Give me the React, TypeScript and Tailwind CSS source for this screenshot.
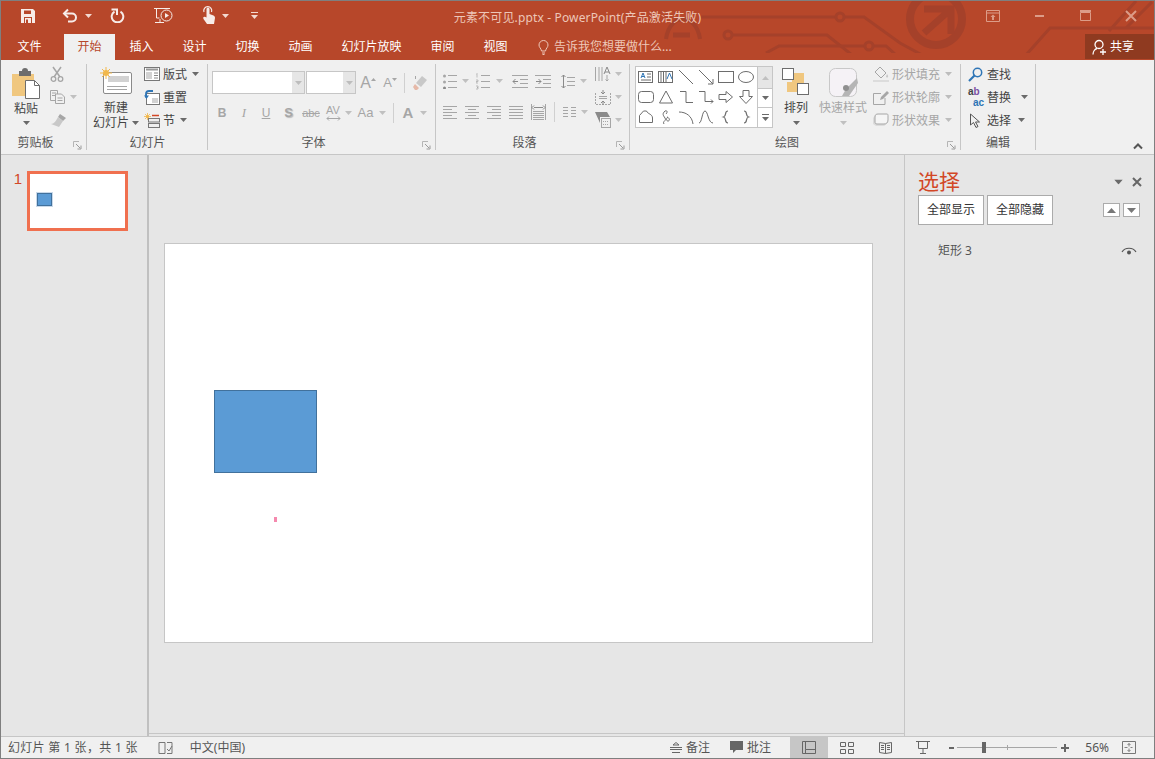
import type { ReactNode } from 'react'

const G = '#a6a6a6'
const D = '#6d6d6d'

function Ic({ w = 16, h = 16, children, className = '' }: { w?: number; h?: number; children: ReactNode; className?: string }) {
  return (
    <svg width={w} height={h} viewBox={`0 0 ${w} ${h}`} fill="none" className={`shrink-0 ${className}`}>
      {children}
    </svg>
  )
}

function Caret({ color = '#6a6a6a', className = '' }: { color?: string; className?: string }) {
  return (
    <svg width="7" height="4" viewBox="0 0 7 4" className={`shrink-0 ${className}`}>
      <path d="M0 0h7L3.5 4z" fill={color} />
    </svg>
  )
}

function Launcher() {
  return (
    <svg width="9" height="9" viewBox="0 0 9 9" fill="none" className="absolute right-[4px] bottom-0">
      <path d="M.5 6V.5H6" stroke="#b5b5b5" />
      <path d="M3 3l4 4M8 4.5V8H4.5" stroke="#9a9a9a" />
    </svg>
  )
}

function Group({ w, label, launcher, children }: { w: number; label: string; launcher?: boolean; children: ReactNode }) {
  return (
    <div style={{ width: w }} className="relative flex h-[86px] shrink-0 flex-col border-r border-[#c6c6c6]">
      <div className="h-[72px] shrink-0">{children}</div>
      <div className={`text-center text-[12px] leading-[14px] text-[#555] ${launcher ? 'pr-[16px]' : ''}`}>{label}</div>
      {launcher && <Launcher />}
    </div>
  )
}

function SmallRow({ icon, text, caret, muted, gap = 'gap-[3px]' }: { icon: ReactNode; text: string; caret?: boolean; muted?: boolean; gap?: string }) {
  return (
    <div className={`flex h-[20px] items-center ${gap}`}>
      {icon}
      <span className={`mt-[2px] text-[12px] leading-[16px] ${muted ? 'text-[#a6a6a6]' : 'text-[#444]'}`}>{text}</span>
      {caret && <Caret color={muted ? '#bdbdbd' : '#6a6a6a'} className="ml-[2px]" />}
    </div>
  )
}

function Cell({ w = 22, children }: { w?: number; children: ReactNode }) {
  return (
    <div style={{ width: w }} className="flex h-[22px] shrink-0 items-center justify-center text-[#a6a6a6]">
      {children}
    </div>
  )
}

const lines = (x1: number, x2: number, ys: number[], c = G) =>
  ys.map(y => <path key={y} d={`M${x1} ${y + 0.5}H${x2}`} stroke={c} />)

function Combo({ w }: { w: number }) {
  return (
    <div style={{ width: w }} className="flex h-[23px] border border-[#c6c6c6] bg-white">
      <div className="flex-1" />
      <div className="flex w-[12px] items-center justify-center bg-[#e6e6e6]">
        <Caret color="#bdbdbd" />
      </div>
    </div>
  )
}

const galleryShapes: ReactNode[] = [
  <><rect x=".5" y="2.5" width="14" height="11" stroke={D} /><path d="M3 9l2-5 2 5M4 7.5h2" stroke="#2f75b5" /><path d="M9 5h4M9 8h4M3 11h10" stroke={D} /></>,
  <><rect x=".5" y="2.5" width="14" height="11" stroke={D} /><path d="M3 3v10M5.500 3v10M8 3v10" stroke={D} /><path d="M9 10l2.500-6L14 10" stroke="#2f75b5" /></>,
  <path d="M1 1l14 14" stroke={D} />,
  <><path d="M1 1l14 14" stroke={D} /><path d="M15 10v5h-5" stroke={D} /></>,
  <rect x=".5" y="2.500" width="15" height="11" stroke={D} />,
  <ellipse cx="8" cy="8" rx="7.500" ry="5.500" stroke={D} />,
  <rect x=".5" y="2.500" width="15" height="11" rx="3" stroke={D} />,
  <path d="M8 2L14.500 14H1.500z" stroke={D} />,
  <path d="M2 2.500h6v11h7" stroke={D} />,
  <><path d="M1 2.500h6v10h8" stroke={D} /><path d="M13 10.500l2 2-2 2" stroke={D} /></>,
  <path d="M1 5.500h7v-3l6.500 5.500L8 13.500v-3H1z" stroke={D} />,
  <path d="M5 1.500h6v6h3.500L8 14.500 1.500 7.500H5z" stroke={D} />,
  <path d="M1.500 13.500v-7l4-4.500h3c1 3 6 3 6 7v4.500z" stroke={D} />,
  <path d="M6 15c-2-3 3-3 1-6S4 5 7 2c2-1 3 1 1 3M9 8c3 1 3 4 1 4-2 0-2-3 0-4" stroke={D} />,
  <path d="M1 3c7 0 13 4 14 12" stroke={D} />,
  <path d="M1 14c3 0 3-12 6-12s3 12 8 12" stroke={D} />,
  <path d="M10 2C6 2 9 7 5.500 8 9 9 6 14 10 14" stroke={D} strokeWidth="1.200" />,
  <path d="M6 2c4 0 1 5 4.500 6C7 9 10 14 6 14" stroke={D} strokeWidth="1.200" />,
]

function Gallery() {
  return (
    <div className="mt-[2px] ml-[5px] flex h-[62px] w-[138px] border border-[#c6c6c6] bg-white">
      <div className="grid flex-1 grid-cols-[repeat(6,20px)] grid-rows-[repeat(3,20px)]">
        {galleryShapes.map((s, i) => (
          <div key={i} className="flex items-center justify-center">
            <Ic>{s}</Ic>
          </div>
        ))}
      </div>
      <div className="flex w-[15px] flex-col border-l border-[#c6c6c6] text-[0]">
        <div className="flex h-[21px] items-center justify-center bg-[#e6e6e6]">
          <svg width="7" height="4" viewBox="0 0 7 4"><path d="M0 4h7L3.500 0z" fill="#c0c0c0" /></svg>
        </div>
        <div className="flex h-[20px] items-center justify-center border-y border-[#c6c6c6]"><Caret /></div>
        <div className="flex flex-1 flex-col items-center justify-center gap-[2px]">
          <div className="h-px w-[7px] bg-[#6a6a6a]" />
          <Caret />
        </div>
      </div>
    </div>
  )
}

function QuickAccess() {
  return (
    <div className="flex h-[33px] items-center pb-[4px]">
      <div className="ml-[16px] flex w-[22px] justify-center">
        <Ic w={14} h={14}>
          <path d="M0 0h12l2 2v12H0z" fill="#f7ece8" />
          <path d="M3 1.500h7v3.500H3z" fill="#b7472a" />
          <path d="M3 8h8v6H3z" fill="#b7472a" />
          <path d="M4 9h6v5H4z" fill="#f7ece8" />
          <path d="M5 10.500h2v3.500H5z" fill="#b7472a" />
        </Ic>
      </div>
      <div className="ml-[20px] flex w-[22px] justify-center">
        <Ic w={16} h={15}>
          <path d="M6 1.500L2 5.500l4 4" stroke="#f7ece8" strokeWidth="2" />
          <path d="M2.500 5.500H10a4 4 0 010 8H6" stroke="#f7ece8" strokeWidth="2" />
        </Ic>
      </div>
      <Caret color="#f3d9d0" className="ml-[4px]" />
      <div className="ml-[14px] flex w-[22px] justify-center">
        <Ic w={15} h={15}>
          <path d="M10.500 3.600a5.800 5.800 0 1 1-6 0" stroke="#f7ece8" strokeWidth="2" />
          <path d="M1.500 1.500h5.500v5.500" stroke="#f7ece8" strokeWidth="2" />
        </Ic>
      </div>
      <div className="ml-[24px] flex w-[24px] justify-center">
        <Ic w={20} h={18}>
          <path d="M0 1.500h16M2.500 2v9h3M6 12v3.500M1 15.500h9" stroke="#f7ece8" />
          <circle cx="12.500" cy="8.500" r="5.500" stroke="#f7ece8" />
          <path d="M11 6l4 2.500-4 2.500z" fill="#f7ece8" />
        </Ic>
      </div>
      <div className="ml-[22px] flex w-[22px] justify-center">
        <Ic w={14} h={19}>
          <path d="M4.500 9V3a1.500 1.500 0 013 0v5l4 1.500c1 .5 1.500 1.500 1.500 2.500l-1 6H5L1.500 13c-1-2 1-3 3-1.500z" fill="#f7ece8" />
          <path d="M2 6a4 4 0 117.500 0" stroke="#f7ece8" strokeWidth="1.200" />
        </Ic>
      </div>
      <Caret color="#f3d9d0" className="ml-[2px]" />
      <div className="ml-[22px] flex flex-col items-center gap-[2px]">
        <div className="h-px w-[7px] bg-[#f3d9d0]" />
        <Caret color="#f3d9d0" />
      </div>
      <div className="ml-auto flex text-[0]">
        <div className="flex w-[46px] justify-center">
          <Ic w={14} h={12}>
            <path d="M.5.500h13v11H.5zM.5 3h13" stroke="#dc9c88" />
            <path d="M7 4.500L4.500 7H6v3h2V7h1.500z" fill="#dc9c88" />
          </Ic>
        </div>
        <div className="flex w-[46px] items-center justify-center">
          <div className="h-[2px] w-[9px] bg-[#dc9c88]" />
        </div>
        <div className="flex w-[46px] justify-center">
          <Ic w={11} h={11}>
            <path d="M.5 2.500h10v8H.5z" stroke="#dc9c88" />
            <path d="M0 0h11v2H0z" fill="#dc9c88" />
          </Ic>
        </div>
        <div className="flex w-[46px] justify-center">
          <Ic w={12} h={12}>
            <path d="M1 1l10 10M11 1L1 11" stroke="#dc9c88" strokeWidth="2" />
          </Ic>
        </div>
      </div>
    </div>
  )
}

function CircuitArt() {
  return (
    <svg width="1155" height="52" viewBox="0 0 1155 52" fill="none" className="pointer-events-none absolute top-0 left-0">
      <g stroke="#a5412a" strokeWidth="3">
        <path d="M665 38c2-14 10-20 17-20s15 6 17 20" strokeWidth="4" />
        <path d="M672 34h17" strokeWidth="5" />
        <path d="M700 16h135M843 16h20l36 26 22 12" />
        <circle cx="839" cy="16" r="4" />
        <circle cx="727" cy="34" r="4" />
        <path d="M731 34h95l25 20" />
        <path d="M765 52l13-7h86M872 45h13l9 8" />
        <circle cx="868" cy="45" r="4" />
        <circle cx="935" cy="18" r="26" strokeWidth="8" />
        <path d="M923 8h27v25M950 8l-27 24" strokeWidth="7" />
        <path d="M1025 54l24-27h106M1108 30l27-30M1125 27l26-26" />
      </g>
    </svg>
  )
}

function Tabs() {
  const tabs = ['插入', '设计', '切换', '动画', '幻灯片放映', '审阅', '视图']
  return (
    <div className="relative flex h-[26px] items-stretch text-[12px] leading-[26px] text-white">
      <div className="ml-[15px] w-[27px] text-center">文件</div>
      <div className="ml-[21px] w-[51px] bg-[#f0f0f0] text-center text-[#b7472a]">开始</div>
      <div className="flex gap-[2px] pl-[1px]">
        {tabs.map(t => (
          <div key={t} className="px-[13.500px]">{t}</div>
        ))}
      </div>
      <div className="ml-[17px] flex items-center gap-[5px] text-[#eec7b9]">
        <Ic w={11} h={15}>
          <path d="M3.500 11C3 8 1 7.500 1 5a4.500 4.500 0 019 0c0 2.500-2 3-2.500 6zM4 13h3M4.500 14.500h2" stroke="#eec7b9" />
        </Ic>
        告诉我您想要做什么...
      </div>
      <div className="ml-auto flex h-[25px] w-[69px] items-center gap-[2px] bg-[#8f3a20] pl-[7px]">
        <Ic w={16} h={16}>
          <circle cx="7" cy="5.500" r="4" stroke="#fff" strokeWidth="1.300" />
          <path d="M1 15.500c0-3 2-5.500 4-6M11 10v6M8 13h6" stroke="#fff" strokeWidth="1.300" />
        </Ic>
        共享
      </div>
    </div>
  )
}

function ClipboardGroup() {
  return (
    <Group w={86} label="剪贴板" launcher>
      <div className="flex">
        <div className="ml-[5px] flex w-[40px] flex-col items-center text-[12px] leading-[15px] text-[#444]">
          <Ic w={30} h={33} className="mt-[3px]">
            <path d="M1 7h22v22H1z" fill="#f0c77f" />
            <path d="M8 4h3a3 3 0 016 0h3v5H8z" fill="#6d6d6d" />
            <path d="M14.500 13.500h9l5 5v13h-14z" fill="#fff" stroke="#6d6d6d" />
            <path d="M23.500 13.500v5h5" stroke="#6d6d6d" />
          </Ic>
          <span className="mt-[1px] leading-[16px]">粘贴</span>
          <Caret className="mt-[4px]" />
        </div>
        <div className="flex flex-col gap-[3px] pl-[4px]">
          <div className="flex h-[20px] items-center">
            <Ic w={14} h={16}>
              <path d="M3 1l7 10M11 1L4 11" stroke={G} strokeWidth="1.500" />
              <circle cx="3.500" cy="13" r="2.300" stroke={G} strokeWidth="1.300" />
              <circle cx="10.500" cy="13" r="2.300" stroke={G} strokeWidth="1.300" />
            </Ic>
          </div>
          <div className="flex h-[20px] items-center gap-[4px]">
            <Ic w={16} h={14}>
              <path d="M.5.500h7v10h-7zM2 3h4M2 5.500h4" stroke={G} />
              <path d="M5.500 4h6l3 3v6.500h-9z" fill="#f0f0f0" stroke={G} />
              <path d="M7.500 8h5M7.500 10.500h5" stroke={G} />
            </Ic>
            <Caret color="#c0c0c0" />
          </div>
          <div className="flex h-[20px] items-center">
            <Ic w={17} h={15}>
              <path d="M10 1l6 4-3 3-5-4z" fill={G} />
              <path d="M8 4l5 4-4 6-8-3c3 0 5-3 7-7z" fill="#c8c8c8" />
            </Ic>
          </div>
        </div>
      </div>
    </Group>
  )
}

function SlidesGroup() {
  return (
    <Group w={120} label="幻灯片">
      <div className="flex">
        <div className="ml-[5px] flex w-[46px] flex-col items-center text-[12px] leading-[15px] text-[#444]">
          <Ic w={32} h={28} className="mt-[3px]">
            <rect x="3.500" y="5.500" width="28" height="21" rx="1.500" fill="#fff" stroke="#8a8a8a" />
            <path d="M8 9h21v6H8z" fill="#d2d2d2" />
            <path d="M7 19.500h20M7 22.500h20" stroke="#a6a6a6" />
            <circle cx="6" cy="6" r="3" fill="#f2b84b" />
            <path d="M6 0v12M0 6h12M2 2l8 8M10 2l-8 8" stroke="#f2b84b" />
          </Ic>
          <span className="mt-[5px] leading-[15px]">新建</span>
          <span className="flex items-center gap-[3px]">
            幻灯片
            <Caret />
          </span>
        </div>
        <div className="ml-[5px] flex flex-col gap-[3px]">
          <SmallRow
            icon={
              <Ic w={16} h={14}>
                <rect x=".5" y=".5" width="15" height="13" stroke="#777" fill="#fff" />
                <path d="M2 2.500h12" stroke="#999" strokeWidth="2" />
                <path d="M2 5h6v7H2z" fill="#d2d2d2" />
                <path d="M10 6h4M10 8.500h4M10 11h4" stroke="#888" />
              </Ic>
            }
            text="版式"
            caret
          />
          <SmallRow
            icon={
              <Ic w={16} h={15}>
                <rect x="2.500" y="3.500" width="13" height="11" stroke="#777" fill="#fff" />
                <path d="M8 8h6v5H8z" fill="#d2d2d2" />
                <path d="M2 7.500V4a3 3 0 013-3h4" stroke="#2e75b6" strokeWidth="1.800" />
                <path d="M0 5.500h5L2.500 9z" fill="#2e75b6" />
              </Ic>
            }
            text="重置"
          />
          <SmallRow
            icon={
              <Ic w={16} h={15}>
                <circle cx="3.500" cy="3.500" r="1.500" fill="#f2b84b" />
                <path d="M3.500 0v7M0 3.500h7M1 1l5 5M6 1L1 6" stroke="#f2b84b" strokeWidth=".8" />
                <path d="M8 2.500h7" stroke="#d24726" strokeWidth="1.500" />
                <rect x="4.500" y="5.500" width="11" height="3.500" stroke="#777" />
                <rect x="4.500" y="10.500" width="11" height="4" stroke="#777" />
              </Ic>
            }
            text="节"
            caret
          />
        </div>
      </div>
    </Group>
  )
}

function FontGroup() {
  return (
    <Group w={228} label="字体" launcher>
      <div className="flex items-center pt-[7px] pl-[4px]">
        <Combo w={93} />
        <div className="w-px" />
        <Combo w={50} />
        <div className="ml-px flex">
          <Cell>
            <span className="font-['Liberation_Sans',sans-serif] text-[16px]">A</span>
            <span className="mb-[7px] text-[0]"><svg width="5" height="3"><path d="M0 3h5L2.500 0z" fill={G} /></svg></span>
          </Cell>
          <Cell>
            <span className="font-['Liberation_Sans',sans-serif] text-[13px]">A</span>
            <span className="mb-[7px] text-[0]"><svg width="5" height="3"><path d="M0 0h5L2.500 3z" fill={G} /></svg></span>
          </Cell>
        </div>
        <div className="mx-[3px] h-[20px] w-px bg-[#d0d0d0]" />
        <Cell w={24}>
          <Ic w={16} h={16}>
            <path d="M4 8l6-7 5 4-6 7z" fill="#c8c8c8" />
            <path d="M3 9l4 4-2 2H3l-2-3z" fill="#e6b9a8" />
            <path d="M3.500 1v3" stroke={G} />
          </Ic>
        </Cell>
      </div>
      <div className="mt-[8px] flex items-center pl-[3px] font-['Liberation_Sans',sans-serif]">
        <Cell><span className="text-[12px] font-bold">B</span></Cell>
        <Cell><span className="font-['Liberation_Serif',serif] text-[13px] italic">I</span></Cell>
        <Cell><span className="text-[12px] underline">U</span></Cell>
        <Cell w={23}><span className="text-[13px] font-bold [text-shadow:1px_1px_1px_#bbb]">S</span></Cell>
        <Cell><span className="text-[11px] line-through">abc</span></Cell>
        <Cell>
          <span className="flex flex-col items-center text-[11px] leading-[11px]">
            AV
            <svg width="15" height="5" viewBox="0 0 15 5" fill="none"><path d="M1 2.500h13M3 .5l-2 2 2 2M12 .5l2 2-2 2" stroke={G} /></svg>
          </span>
        </Cell>
        <Caret color="#c0c0c0" className="ml-[1px]" />
        <Cell w={27}><span className="text-[13px]">Aa</span></Cell>
        <Caret color="#c0c0c0" />
        <div className="mr-[3px] ml-[7px] h-[20px] w-px bg-[#d0d0d0]" />
        <Cell w={22}><span className="text-[15px] font-bold">A</span></Cell>
        <Caret color="#c0c0c0" className="ml-[1px]" />
      </div>
    </Group>
  )
}

function AlignIcon({ kind }: { kind: 'l' | 'c' | 'r' | 'j' }) {
  const short = { l: 'M0 3.500h9M0 9.500h9', c: 'M3 3.500h8M3 9.500h8', r: 'M5 3.500h9M5 9.500h9', j: 'M0 3.500h14M0 9.500h14' }[kind]
  return (
    <Ic w={14} h={13}>
      <path d="M0 .5h14M0 6.500h14M0 12.500h14" stroke={G} />
      <path d={short} stroke={G} />
    </Ic>
  )
}

function ParagraphGroup() {
  return (
    <Group w={194} label="段落" launcher>
      <div className="flex">
        <div className="flex w-[159px] flex-col pl-[7px]">
          <div className="mt-[6px] flex h-[22px] items-center">
            <Ic w={14} h={15}>
              <circle cx="1.500" cy="2" r="1.500" fill={G} />
              <circle cx="1.500" cy="8" r="1.500" fill={G} />
              <circle cx="1.500" cy="14" r="1.500" fill="#8a8a8a" />
              {lines(5, 14, [1, 7, 13])}
            </Ic>
            <Caret color="#c0c0c0" className="ml-[5px]" />
            <Ic w={15} h={17} className="ml-[7px]">
              <path d="M0 1.500l1-1v4M0 7h2v1.500H0V10h2M0 13h2v1.500H1 2V16H0" stroke={G} strokeWidth=".7" />
              {lines(5, 14, [2, 8, 14])}
            </Ic>
            <Caret color="#c0c0c0" className="ml-[5px]" />
            <Ic w={16} h={13} className="ml-[9px]">
              {lines(0, 16, [0, 12])}
              {lines(8, 16, [4, 8])}
              <path d="M6 6.500H1M3.500 4L1 6.500 3.500 9" stroke="#8a8a8a" />
            </Ic>
            <Ic w={16} h={13} className="ml-[7px]">
              {lines(0, 16, [0, 12])}
              {lines(8, 16, [4, 8])}
              <path d="M1 6.500h5M3.500 4L6 6.500 3.500 9" stroke="#8a8a8a" />
            </Ic>
            <Ic w={14} h={15} className="ml-[10px]">
              <path d="M2.500 1v13M.5 3l2-2 2 2M.5 12l2 2 2-2" stroke="#8a8a8a" />
              {lines(6, 14, [3, 7, 11])}
            </Ic>
            <Caret color="#c0c0c0" className="ml-[5px]" />
          </div>
          <div className="mt-[9px] flex h-[22px] items-center">
            <AlignIcon kind="l" />
            <div className="ml-[8px]"><AlignIcon kind="c" /></div>
            <div className="ml-[8px]"><AlignIcon kind="r" /></div>
            <div className="ml-[8px]"><AlignIcon kind="j" /></div>
            <Ic w={15} h={16} className="ml-[8px]">
              <path d="M.5 0v16M14.500 0v16" stroke={G} />
              <path d="M3 3.500h9M3 1.500l-2 2 2 2M12 1.500l2 2-2 2" stroke="#8a8a8a" />
              {lines(2, 13, [7, 9, 11, 13, 15])}
            </Ic>
            <div className="mr-[8px] ml-[8px] h-[20px] w-px bg-[#d0d0d0]" />
            <Ic w={13} h={12}>
              {lines(0, 5, [1, 4, 7, 10])}
              {lines(8, 13, [1, 4, 7, 10])}
            </Ic>
            <Caret color="#c0c0c0" className="ml-[5px]" />
          </div>
        </div>
        <div className="flex flex-col gap-[3px]">
          <div className="flex h-[20px] items-center gap-[4px]">
            <Ic w={16} h={17}>
              <path d="M.5 1v14M4 1v14M7 1v14" stroke={G} />
              <path d="M9 8l3-7 3 7M10 6h4" stroke="#8a8a8a" />
              <path d="M12 9v6M10.500 13.500l1.500 1.500 1.500-1.500" stroke={G} />
            </Ic>
            <Caret color="#c0c0c0" />
          </div>
          <div className="flex h-[20px] items-center gap-[4px]">
            <Ic w={16} h={15}>
              <path d="M.5 3v11.500h15V3" stroke={G} strokeDasharray="2 1" />
              <path d="M8 0v4M6 2l2 2 2-2M8 15v-4M6 13l2-2 2 2" stroke="#8a8a8a" />
              {lines(4, 12, [6, 8])}
            </Ic>
            <Caret color="#c0c0c0" />
          </div>
          <div className="flex h-[20px] items-center gap-[4px]">
            <Ic w={16} h={16}>
              <path d="M0 0h12l3 5H5v6z" fill="#8a8a8a" />
              <rect x="6.500" y="6.500" width="9" height="9" fill="#f0f0f0" stroke={G} />
              <path d="M8 9.500h6M8 12.500h6" stroke={G} strokeDasharray="1 1" />
            </Ic>
            <Caret color="#c0c0c0" />
          </div>
        </div>
      </div>
    </Group>
  )
}

function DrawingGroup() {
  return (
    <Group w={331} label="绘图" launcher>
      <div className="flex">
        <Gallery />
        <div className="ml-[8px] flex w-[30px] flex-col items-center text-[12px] text-[#444]">
          <Ic w={28} h={28} className="mt-[4px]">
            <path d="M10 5h12v10H10zM5 14h10v10H5z" fill="#f0c77f" />
            <rect x=".5" y=".5" width="11" height="11" fill="#fff" stroke="#6d6d6d" />
            <rect x="15.500" y="15.500" width="11" height="11" fill="#fff" stroke="#6d6d6d" />
          </Ic>
          <span className="mt-[4px] leading-[16px] whitespace-nowrap">排列</span>
          <Caret className="mt-[5px]" />
        </div>
        <div className="ml-[7px] flex w-[50px] flex-col items-center text-[12px] text-[#a6a6a6]">
          <Ic w={30} h={30} className="mt-[4px]">
            <rect x="1.500" y=".5" width="27" height="28" rx="6" fill="#f5f2f6" stroke="#c8c8c8" />
            <path d="M29 10L18 21l-4 7h7l9-13z" fill="#b5b5b5" />
            <circle cx="18" cy="20" r="3" fill="#8f8f8f" />
          </Ic>
          <span className="mt-[2px] leading-[16px] whitespace-nowrap">快速样式</span>
          <Caret color="#c0c0c0" className="mt-[5px]" />
        </div>
        <div className="ml-[5px] flex flex-col gap-[3px]">
          <SmallRow
            muted
            caret
            icon={
              <Ic w={16} h={16}>
                <path d="M7 1l6 6-5 5-6-6z" stroke={G} fill="#f0f0f0" />
                <path d="M0 14h16v2H0z" fill="#dcdcdc" />
                <path d="M14 8c1 1.500 1.500 2 1 3s-2 .5-2-.5z" fill="#c8c8c8" />
              </Ic>
            }
            text="形状填充"
          />
          <SmallRow
            muted
            caret
            icon={
              <Ic w={16} h={15}>
                <path d="M12 8v6.500H.5v-11H8" stroke={G} />
                <path d="M14 1l2 2-6 6-3 1 1-3z" fill={G} />
              </Ic>
            }
            text="形状轮廓"
          />
          <SmallRow
            muted
            caret
            icon={
              <Ic w={16} h={14}>
                <path d="M3 1h11v8c0 2-2 4-4 4H3l-3-2V5z" fill="#dcdcdc" />
                <path d="M2 4c0-2 1-3 3-3h9c1 0 1 1 1 2v4c0 3-2 4-4 4H4c-2 0-2-1-2-3z" fill="#f5f5f5" stroke={G} />
              </Ic>
            }
            text="形状效果"
          />
        </div>
      </div>
    </Group>
  )
}

function EditGroup() {
  return (
    <Group w={75} label="编辑">
      <div className="flex flex-col gap-[3px] pl-[7px]">
        <SmallRow
          gap="gap-[4px]"
          icon={
            <Ic w={15} h={15}>
              <circle cx="9.500" cy="5.500" r="4.200" stroke="#2e75b6" strokeWidth="1.500" />
              <path d="M6.500 8.500L1 14" stroke="#2e75b6" strokeWidth="2.200" />
            </Ic>
          }
          text="查找"
        />
        <div className="flex h-[20px] items-center gap-[3px]">
          <span className="flex w-[16px] flex-col items-end font-['Liberation_Sans',sans-serif] text-[10px] leading-[11.500px] font-bold">
            <span className="self-start text-[#7b4ea3]"><span className="text-[#444]">a</span>b</span>
            <span className="text-[#2e75b6]">ac</span>
          </span>
          <span className="mt-[2px] text-[12px] leading-[16px] text-[#444]">替换</span>
          <Caret className="ml-[7px]" />
        </div>
        <SmallRow
          gap="gap-[5px]"
          caret
          icon={
            <Ic w={14} h={15}>
              <path d="M2.500 1v11l3-2.500L8 14.500l2-1-2.500-4.500H11.500z" stroke="#555" />
            </Ic>
          }
          text="选择"
        />
      </div>
    </Group>
  )
}

function Ribbon() {
  return (
    <div className="flex h-[95px] shrink-0 border-b border-[#c6c6c6] bg-[#f0f0f0] pt-[4px]">
      <ClipboardGroup />
      <div className="ml-px flex">
        <SlidesGroup />
        <FontGroup />
        <ParagraphGroup />
        <DrawingGroup />
        <EditGroup />
      </div>
      <div className="ml-auto flex items-end pr-[11px] pb-[4px]">
        <svg width="10" height="7" viewBox="0 0 10 7" fill="none"><path d="M1 5.500l4-4 4 4" stroke="#555" strokeWidth="2" /></svg>
      </div>
    </div>
  )
}

function ThumbPane() {
  return (
    <div className="flex w-[148px] shrink-0 items-start border-r-2 border-[#c0c0c0] pt-[15px]">
      <span className="w-[26px] pr-[5px] text-right font-['Liberation_Sans',sans-serif] text-[15px] leading-[18px] text-[#d24726]">1</span>
      <div className="mt-px flex h-[60px] w-[101px] items-start border-[3px] border-[#f0704f] bg-white pt-[19px] pl-[7px]">
        <div className="h-[13px] w-[15px] border border-[#41719c] bg-[#5b9bd5] outline outline-[#c9d9ea]" />
      </div>
    </div>
  )
}

function SlideCanvas() {
  return (
    <div className="flex min-w-0 flex-1 flex-col">
      <div className="flex flex-1 items-start border-b border-[#c6c6c6] pt-[88px] pl-[15px]">
        <div className="h-[400px] w-[709px] border border-[#c6c6c6] bg-white pt-[146px] pl-[49px]">
          <div className="h-[83px] w-[103px] border border-[#41719c] bg-[#5b9bd5]" />
          <div className="mt-[44px] ml-[60px] h-[5px] w-[3px] bg-[#f589ae]" />
        </div>
      </div>
      <div className="h-[2px]" />
    </div>
  )
}

function SelectionPane() {
  return (
    <div className="w-[250px] shrink-0 border-l border-[#c6c6c6] bg-[#e6e6e6] pt-[14px] pl-[13px]">
      <div className="flex h-[25px] items-center">
        <span className="text-[21px] leading-[25px] text-[#d24726]">选择</span>
        <Caret color="#6a6a6a" className="ml-[155px] scale-125" />
        <svg width="10" height="10" viewBox="0 0 10 10" fill="none" className="ml-[10px]">
          <path d="M1 1l8 8M9 1L1 9" stroke="#666" strokeWidth="2" />
        </svg>
      </div>
      <div className="mt-px flex items-center">
        <button className="h-[30px] w-[66px] border border-[#ababab] bg-white text-[12px] text-[#333]">全部显示</button>
        <button className="ml-[3px] h-[30px] w-[66px] border border-[#ababab] bg-white text-[12px] text-[#333]">全部隐藏</button>
        <div className="ml-[50px] flex h-[14px] w-[17px] items-center justify-center border border-[#ababab] bg-white">
          <svg width="9" height="5" viewBox="0 0 9 5"><path d="M0 5h9L4.500 0z" fill="#777" /></svg>
        </div>
        <div className="ml-[3px] flex h-[14px] w-[17px] items-center justify-center border border-[#ababab] bg-white">
          <svg width="9" height="5" viewBox="0 0 9 5"><path d="M0 0h9L4.500 5z" fill="#777" /></svg>
        </div>
      </div>
      <div className="mt-[17px] flex h-[18px] items-center pl-[20px] text-[12px] text-[#555]">
        矩形 3
        <svg width="16" height="9" viewBox="0 0 16 9" fill="none" className="ml-[149px]">
          <path d="M1 5c3-5 11-5 14 0" stroke="#555" strokeWidth="1.200" />
          <circle cx="8" cy="5.500" r="2" fill="#555" />
        </svg>
      </div>
    </div>
  )
}

function StatusBar() {
  return (
    <div className="flex h-[22px] shrink-0 items-center border-t border-[#c6c6c6] bg-[#f0f0f0] text-[12px] leading-[16px] text-[#555]">
      <span className="ml-[7px] tracking-[0.3px]">幻灯片 第 1 张，共 1 张</span>
      <Ic w={15} h={14} className="ml-[20px]">
        <path d="M7 1.500H1v11h6M7 1.500v11M9 1.500h5v11H9" stroke="#777" />
        <path d="M9 8l2 2 3-5" stroke="#777" />
      </Ic>
      <span className="ml-[17px]">中文(中国)</span>
      <div className="ml-auto flex h-full items-center">
        <Ic w={12} h={11}>
          <path d="M6 .5L3 3h6zM0 5.500h12M0 7.500h12M2 10.500h8" stroke="#666" />
        </Ic>
        <span className="ml-[4px]">备注</span>
        <Ic w={14} h={13} className="ml-[20px]">
          <path d="M0 0h13v9H6l-3 3V9H0z" fill="#666" />
        </Ic>
        <span className="ml-[3px]">批注</span>
        <div className="ml-[19px] flex h-full w-[38px] items-center justify-center bg-[#c6c6c6]">
          <Ic w={14} h={13}>
            <path d="M.5.500h13v12H.5zM3.500.5v8h10M3.500 8.500v4" stroke="#666" />
          </Ic>
        </div>
        <div className="flex w-[38px] justify-center">
          <Ic w={14} h={12}>
            <path d="M.5.500h5v4h-5zM8.500.5h5v4h-5zM.5 7.500h5v4h-5zM8.500 7.500h5v4h-5z" stroke="#666" />
          </Ic>
        </div>
        <div className="flex w-[38px] justify-center">
          <Ic w={13} h={13}>
            <path d="M.5 1.500l6 1 6-1v10l-6 1-6-1zM6.500 2.500v10M2 4.500h3M2 6.500h3M2 8.500h3M8 4.500h3M8 6.500h3M8 8.500h3" stroke="#666" />
          </Ic>
        </div>
        <div className="flex w-[37px] justify-center">
          <Ic w={14} h={13}>
            <path d="M0 .5h14M2.500 1v6.500h9V1M7 8v4M4 12.500h6" stroke="#666" />
          </Ic>
        </div>
        <div className="ml-[8px] h-[2px] w-[5px] bg-[#666]" />
        <div className="relative mx-[3px] flex h-[12px] w-[100px] items-center">
          <div className="h-px w-full bg-[#a6a6a6]" />
          <div className="absolute left-[50px] h-[5px] w-px bg-[#a6a6a6]" />
          <div className="absolute left-[25px] h-[11px] w-[4px] bg-[#666]" />
        </div>
        <svg width="8" height="8" viewBox="0 0 8 8" className="ml-[1px]"><path d="M3 0h2v3h3v2H5v3H3V5H0V3h3z" fill="#666" /></svg>
        <span className="ml-[14px] w-[26px] text-right">56%</span>
        <Ic w={14} h={13} className="mr-[18px] ml-[13px]">
          <path d="M.5.500h13v12H.5z" stroke="#777" />
          <path d="M7 2.500v3M5.500 4L7 2.500 8.500 4M7 10.500v-3M5.500 9L7 10.500 8.500 9M2.500 6.500h3M10.500 6.500h-2" stroke="#666" strokeWidth=".8" />
        </Ic>
      </div>
    </div>
  )
}

export default function App() {
  return (
    <div className="flex h-[759px] w-[1155px] flex-col overflow-hidden border border-[#7f7f7f] bg-[#e6e6e6] font-['Noto_Sans','Noto_Sans_CJK_SC',sans-serif]">
      <div className="relative h-[59px] shrink-0 bg-[#b7472a]">
        <CircuitArt />
        <div className="relative">
          <QuickAccess />
          <div className="absolute top-[8px] right-0 left-0 text-center text-[12px] leading-[18px] tracking-[0.15px] text-[#edc6b8]">
            元素不可见.pptx - PowerPoint(产品激活失败)
          </div>
          <Tabs />
        </div>
      </div>
      <Ribbon />
      <div className="flex min-h-0 flex-1">
        <ThumbPane />
        <SlideCanvas />
        <SelectionPane />
      </div>
      <StatusBar />
    </div>
  )
}
